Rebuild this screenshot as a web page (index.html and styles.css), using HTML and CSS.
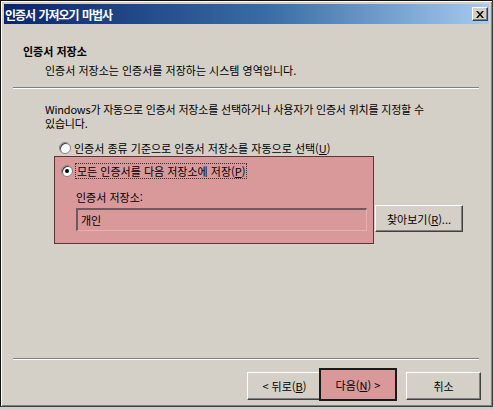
FILE: index.html
```html
<!DOCTYPE html>
<html lang="ko">
<head>
  <meta charset="UTF-8" />
  <title>인증서 가져오기 마법사</title>
  <link rel="stylesheet" href="styles.css">
</head>
<body>
  <div class="window">
    <div class="titlebar">
      <span class="title">인증서 가져오기 마법사</span>
      <span class="close">
        <svg width="8" height="7" viewBox="0 0 8 7"><path d="M0 0h2l2 2.5L6 0h2L5 3.5 8 7H6L4 4.5 2 7H0l3-3.5z" fill="#000"/></svg>
      </span>
    </div>

    <div class="header">
      <div class="header-title">인증서 저장소</div>
      <div class="header-sub">인증서 저장소는 인증서를 저장하는 시스템 영역입니다.</div>
    </div>

    <div class="sep"></div>

    <div class="content">
      <p class="intro">Windows가 자동으로 인증서 저장소를 선택하거나 사용자가 인증서 위치를 지정할 수 있습니다.</p>

      <label class="radio-row">
        <span class="radio"></span>
        <span>인증서 종류 기준으로 인증서 저장소를 자동으로 선택(<u>U</u>)</span>
      </label>

      <div class="store-row">
        <div class="mark">
          <label class="radio-row">
            <span class="radio checked"></span>
            <span class="focus">모든 인증서를 다음 저장소에 저장(<u>P</u>)</span>
          </label>
          <div class="store-label">인증서 저장소:</div>
          <div class="field">개인</div>
        </div>
        <button class="btn browse">찾아보기(<u>R</u>)...</button>
      </div>
    </div>

    <div class="footer">
      <div class="sep"></div>
      <div class="buttons">
        <button class="btn">&lt; 뒤로(<u>B</u>)</button>
        <button class="btn next">다음(<u>N</u>) &gt;</button>
        <button class="btn cancel">취소</button>
      </div>
    </div>
  </div>
</body>
</html>
```

FILE: styles.css
```css
html,
body {
  margin: 0;
  height: 100%;
}

body {
  background: #cfcfcf;
  font-family: "Noto Sans CJK KR", "DejaVu Sans", sans-serif;
  font-size: 11px;
  color: #000;
}

.window {
  width: 493px;
  height: 407px;
  box-sizing: border-box;
  display: flex;
  flex-direction: column;
  background: #d4d0c8;
  border-top: 1px solid #111;
  border-left: 1px solid #111;
  border-right: 1px solid #404040;
  border-bottom: 1px solid #404040;
  padding: 3px 3px 6px 3px;
  box-shadow: inset 1px 1px 0 #fff, inset -1px -1px 0 #808080;
}

.titlebar {
  height: 20px;
  display: flex;
  align-items: center;
  justify-content: space-between;
  padding: 0 1px 0 1px;
  background: linear-gradient(to right, #0a246a, #3a6ea5 55%, #a6caf0);
}

.title {
  color: #fff;
  font-weight: bold;
  font-size: 12px;
  letter-spacing: -1px;
  word-spacing: 1px;
}

.close {
  width: 14px;
  height: 12px;
  display: flex;
  align-items: center;
  justify-content: center;
  background: #d4d0c8;
  border-top: 1px solid #fff;
  border-left: 1px solid #fff;
  border-right: 1px solid #404040;
  border-bottom: 1px solid #404040;
  box-shadow: inset -1px -1px 0 #808080;
}

.header {
  padding: 20px 0 0 19px;
  line-height: 14px;
}

.header-title {
  font-weight: bold;
}

.header-sub {
  margin: 5px 0 0 22px;
}

.sep {
  height: 1px;
  margin: 10px 10px 0 9px;
  background: #808080;
  border-bottom: 1px solid #fff;
}

.content {
  padding-left: 41px;
  line-height: 14px;
}

.intro {
  margin: 13px 0 0 0;
  width: 388px;
  letter-spacing: -0.2px;
}

.radio-row {
  display: flex;
  align-items: center;
  gap: 3px;
  height: 16px;
}

.content > .radio-row {
  margin: 10px 0 0 14px;
}

.radio {
  width: 10px;
  height: 10px;
  border-radius: 50%;
  background: #fff;
  border: 1px solid #808080;
  box-shadow: inset 1px 1px 0 #404040;
  display: flex;
  align-items: center;
  justify-content: center;
}

.radio.checked::after {
  content: "";
  width: 4px;
  height: 4px;
  border-radius: 50%;
  background: #000;
}

.focus {
  outline: 1px dotted #333;
  outline-offset: 0;
  padding: 0 1px;
}

.store-row {
  display: flex;
  align-items: flex-end;
  gap: 1px;
  margin-left: 9px;
}

.mark {
  width: 320px;
  box-sizing: border-box;
  background: #d9999b;
  border: 1px solid #5e3438;
  padding: 6px 6px 12px 6px;
}

.store-label {
  margin: 11px 0 0 15px;
}

.field {
  margin: 4px 0 0 15px;
  width: 291px;
  height: 23px;
  box-sizing: border-box;
  padding: 3px 3px;
  border-top: 2px solid #6e5a5c;
  border-left: 2px solid #6e5a5c;
  border-right: 1px solid #e8b0b2;
  border-bottom: 1px solid #e8b0b2;
}

.btn {
  font-family: inherit;
  font-size: 11px;
  background: #d4d0c8;
  color: #000;
  padding: 0;
  border-top: 1px solid #fff;
  border-left: 1px solid #fff;
  border-right: 1px solid #404040;
  border-bottom: 1px solid #404040;
  box-shadow: inset -1px -1px 0 #808080;
}

.browse {
  width: 88px;
  height: 27px;
  margin-bottom: 12px;
}

.footer {
  margin-top: auto;
}

.buttons {
  display: flex;
  justify-content: flex-end;
  margin: 12px 8px 0 0;
}

.buttons .btn {
  width: 75px;
  height: 28px;
}

.buttons .next {
  width: 78px;
  height: 33px;
  margin: -4px 0 -1px -3px;
  background: #d9999b;
  border: 2px solid #1a1a1a;
  box-shadow: none;
}

.buttons .cancel {
  margin-left: 9px;
}
```
